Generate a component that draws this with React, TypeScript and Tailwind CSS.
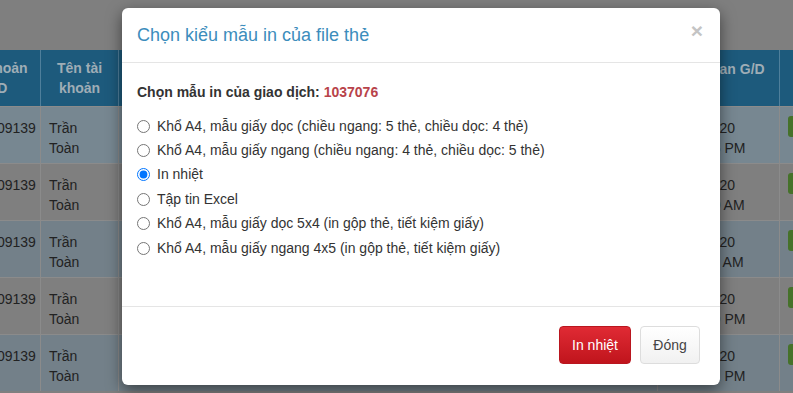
import React from 'react';

const ROWS = [
  { time: '25/11/2020', clock: '10:30:15 PM', tint: 'bg-[#778791]' },
  { time: '25/11/2020', clock: '09:12:40 AM', tint: 'bg-[#7f7f7f]' },
  { time: '24/11/2020', clock: '11:05:22 AM', tint: 'bg-[#738089]' },
  { time: '24/11/2020', clock: '03:48:09 PM', tint: 'bg-[#7f7f7f]' },
  { time: '23/11/2020', clock: '04:20:51 PM', tint: 'bg-[#738089]' },
];

const OPTIONS = [
  'Khổ A4, mẫu giấy dọc (chiều ngang: 5 thẻ, chiều dọc: 4 thẻ)',
  'Khổ A4, mẫu giấy ngang (chiều ngang: 4 thẻ, chiều dọc: 5 thẻ)',
  'In nhiệt',
  'Tập tin Excel',
  'Khổ A4, mẫu giấy dọc 5x4 (in gộp thẻ, tiết kiệm giấy)',
  'Khổ A4, mẫu giấy ngang 4x5 (in gộp thẻ, tiết kiệm giấy)',
];

const App: React.FC = () => {
  const [choice, setChoice] = React.useState(2);

  return (
    <div className="relative w-[793px] h-[393px] overflow-hidden bg-[#7f7f7f] font-['Liberation_Sans',Arial,sans-serif] text-[14px]">
      {/* Background page (already dimmed by the backdrop) */}
      <div className="pt-[50px]">
        <div className="-ml-[50px] w-[930px] grid grid-cols-[91px_78px_1fr_122px_100px]">
          {/* Header */}
          <div className="h-[56px] bg-[#1d5a7c] border-r border-[#4f7f9b] flex flex-col items-center justify-center font-bold text-[#9fadb6] leading-[20px]">
            <span>Tài khoản</span>
            <span>G/D</span>
          </div>
          <div className="h-[56px] bg-[#1d5a7c] border-r border-[#4f7f9b] flex flex-col items-center justify-center font-bold text-[#9fadb6] leading-[20px]">
            <span>Tên tài</span>
            <span>khoản</span>
          </div>
          <div className="h-[56px] bg-[#1d5a7c] border-r border-[#4f7f9b]" />
          <div className="h-[56px] bg-[#1d5a7c] border-r border-[#4f7f9b] flex flex-col items-center pt-[9px] font-bold text-[#9fadb6] leading-[20px]">
            <span>Thời gian G/D</span>
          </div>
          <div className="h-[56px] bg-[#1d5a7c]" />

          {ROWS.map((r, i) => (
            <React.Fragment key={i}>
              <div className={`${r.tint} h-[57px] border-t border-r border-[#8b8b8b] px-[8px] pt-[11px] text-[#222] leading-[20px]`}>
                0491009139
              </div>
              <div className={`${r.tint} h-[57px] border-t border-r border-[#8b8b8b] px-[8px] pt-[11px] text-[#222] leading-[20px] flex flex-col`}>
                <span>Trần</span>
                <span>Toàn</span>
              </div>
              <div className={`${r.tint} h-[57px] border-t border-r border-[#8b8b8b]`} />
              <div className={`${r.tint} h-[57px] border-t border-r border-[#8b8b8b] px-[8px] pt-[11px] text-[#222] leading-[20px] flex flex-col`}>
                <span>{r.time}</span>
                <span>{r.clock}</span>
              </div>
              <div className={`${r.tint} h-[57px] border-t border-[#8b8b8b] px-[8px] pt-[9px]`}>
                <span className="inline-block h-[21px] w-[70px] rounded-[3px] bg-[#46722a]" />
              </div>
            </React.Fragment>
          ))}
        </div>
      </div>

      {/* Modal */}
      <div className="absolute left-[122px] top-[8px] w-[598px] h-[377px] bg-white rounded-[6px] shadow-[0_5px_15px_rgba(0,0,0,0.5)] flex flex-col">
        <div className="flex items-start justify-between px-[15px] py-[15px] border-b border-[#e5e5e5]">
          <h4 className="text-[18px] leading-[24px] text-[#3c8dbc]">Chọn kiểu mẫu in của file thẻ</h4>
          <button className="mt-[-3px] mr-[2px] text-[21px] leading-[21px] font-bold text-[#c4c4c4]">×</button>
        </div>

        <div className="h-[243px] px-[15px] pt-[20px]">
          <p className="text-[14px] leading-[18px] font-bold text-[#333] mb-[13px]">
            Chọn mẫu in của giao dịch: <span className="text-[#b8434a]">1037076</span>
          </p>
          {OPTIONS.map((opt, i) => (
            <label key={i} className="flex items-center h-[24.4px] gap-[7px] text-[14px] text-[#333]">
              <input
                type="radio"
                name="mau-in"
                checked={choice === i}
                onChange={() => setChoice(i)}
                className="m-0 w-[13px] h-[13px]"
              />
              <span>{opt}</span>
            </label>
          ))}
        </div>

        <div className="flex justify-end gap-[9px] px-[20px] pt-[19px] pb-[20px] border-t border-[#e5e5e5]">
          <button className="h-[38px] w-[72px] rounded-[4px] border border-[#b9161f] bg-gradient-to-b from-[#e02a34] to-[#c0141c] text-white text-[14px]">
            In nhiệt
          </button>
          <button className="h-[38px] w-[60px] rounded-[4px] border border-[#dddddd] bg-gradient-to-b from-white to-[#f1f1f1] text-[#444] text-[14px]">
            Đóng
          </button>
        </div>
      </div>
    </div>
  );
};

export default App;
